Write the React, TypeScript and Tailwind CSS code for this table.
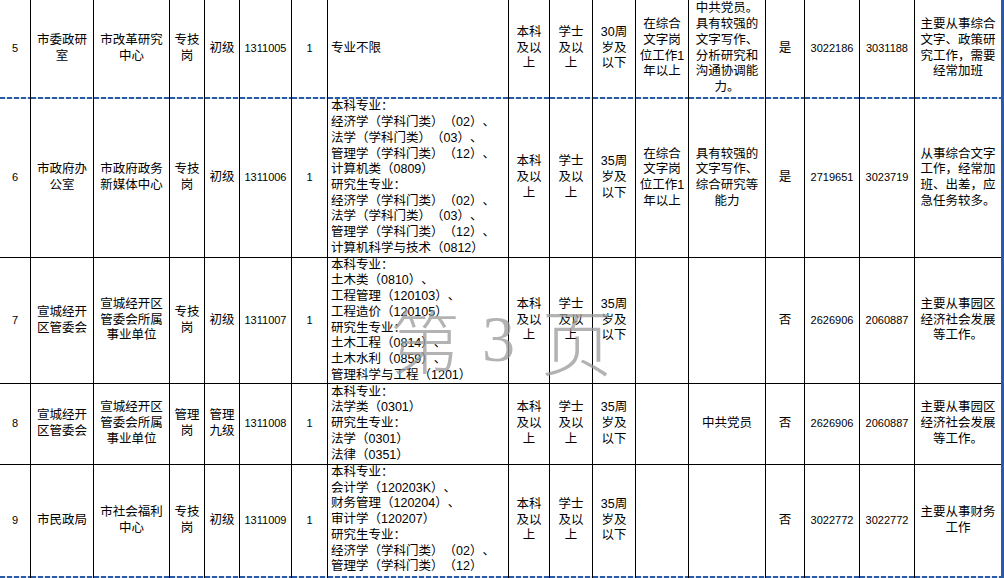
import React from "react";

type K = "c" | "l" | "n" | "lt";
type C = { t: string; k?: K };

const rows: { dashed: boolean; cells: C[] }[] = [
  {
    dashed: true,
    cells: [
      { t: "5", k: "n" },
      { t: "市委政研|室" },
      { t: "市改革研究|中心" },
      { t: "专技|岗" },
      { t: "初级" },
      { t: "1311005", k: "n" },
      { t: "1", k: "n" },
      { t: "专业不限", k: "l" },
      { t: "本科|及以|上" },
      { t: "学士|及以|上" },
      { t: "30周|岁及|以下" },
      { t: "在综合|文字岗|位工作1|年以上" },
      { t: "中共党员。|具有较强的|文字写作、|分析研究和|沟通协调能|力。" },
      { t: "是" },
      { t: "3022186", k: "n" },
      { t: "3031188", k: "n" },
      { t: "主要从事综合|文字、政策研|究工作，需要|经常加班" },
    ],
  },
  {
    dashed: false,
    cells: [
      { t: "6", k: "n" },
      { t: "市政府办|公室" },
      { t: "市政府政务|新媒体中心" },
      { t: "专技|岗" },
      { t: "初级" },
      { t: "1311006", k: "n" },
      { t: "1", k: "n" },
      {
        t: "本科专业：|经济学（学科门类）（02）、|法学（学科门类）（03）、|管理学（学科门类）（12）、|计算机类（0809）|研究生专业：|经济学（学科门类）（02）、|法学（学科门类）（03）、|管理学（学科门类）（12）、|计算机科学与技术（0812）",
        k: "l",
      },
      { t: "本科|及以|上" },
      { t: "学士|及以|上" },
      { t: "35周|岁及|以下" },
      { t: "在综合|文字岗|位工作1|年以上" },
      { t: "具有较强的|文字写作、|综合研究等|能力" },
      { t: "是" },
      { t: "2719651", k: "n" },
      { t: "3023719", k: "n" },
      { t: "从事综合文字|工作，经常加|班、出差，应|急任务较多。" },
    ],
  },
  {
    dashed: false,
    cells: [
      { t: "7", k: "n" },
      { t: "宣城经开|区管委会" },
      { t: "宣城经开区|管委会所属|事业单位" },
      { t: "专技|岗" },
      { t: "初级" },
      { t: "1311007", k: "n" },
      { t: "1", k: "n" },
      {
        t: "本科专业：|土木类（0810）、|工程管理（120103）、|工程造价（120105）|研究生专业：|土木工程（0814）、|土木水利（0859）、|管理科学与工程（1201）",
        k: "l",
      },
      { t: "本科|及以|上" },
      { t: "学士|及以|上" },
      { t: "35周|岁及|以下" },
      { t: "" },
      { t: "" },
      { t: "否" },
      { t: "2626906", k: "n" },
      { t: "2060887", k: "n" },
      { t: "主要从事园区|经济社会发展|等工作。" },
    ],
  },
  {
    dashed: false,
    cells: [
      { t: "8", k: "n" },
      { t: "宣城经开|区管委会" },
      { t: "宣城经开区|管委会所属|事业单位" },
      { t: "管理|岗" },
      { t: "管理|九级" },
      { t: "1311008", k: "n" },
      { t: "1", k: "n" },
      { t: "本科专业：|法学类（0301）|研究生专业：|法学（0301）|法律（0351）", k: "l" },
      { t: "本科|及以|上" },
      { t: "学士|及以|上" },
      { t: "35周|岁及|以下" },
      { t: "" },
      { t: "中共党员" },
      { t: "否" },
      { t: "2626906", k: "n" },
      { t: "2060887", k: "n" },
      { t: "主要从事园区|经济社会发展|等工作。" },
    ],
  },
  {
    dashed: true,
    cells: [
      { t: "9", k: "n" },
      { t: "市民政局" },
      { t: "市社会福利|中心" },
      { t: "专技|岗" },
      { t: "初级" },
      { t: "1311009", k: "n" },
      { t: "1", k: "n" },
      {
        t: "本科专业：|会计学（120203K）、|财务管理（120204）、|审计学（120207）|研究生专业：|经济学（学科门类）（02）、|管理学（学科门类）（12）",
        k: "lt",
      },
      { t: "本科|及以|上" },
      { t: "学士|及以|上" },
      { t: "35周|岁及|以下" },
      { t: "" },
      { t: "" },
      { t: "否" },
      { t: "3022772", k: "n" },
      { t: "3022772", k: "n" },
      { t: "主要从事财务|工作" },
    ],
  },
];

function Lines({ t }: { t: string }) {
  const parts = t.split("|");
  return (
    <>
      {parts.map((p, i) => (
        <React.Fragment key={i}>
          {i > 0 && <br />}
          {p}
        </React.Fragment>
      ))}
    </>
  );
}

function Cell({ c, dashed, last }: { c: C; dashed: boolean; last: boolean }) {
  let align = "justify-center items-center text-center";
  if (c.k === "l") align = "justify-start items-center text-left pl-[3px]";
  if (c.k === "lt") align = "justify-start items-start text-left pl-[3px]";
  const font = c.k === "n" ? "text-[11px] font-['Liberation_Sans',sans-serif]" : "";
  return (
    <div className={"flex min-h-0 flex-col " + (last ? "" : "border-r border-black")}>
      <div className={"flex min-h-0 flex-1 overflow-hidden " + align}>
        <div className={"whitespace-nowrap " + font}>
          <Lines t={c.t} />
        </div>
      </div>
      {dashed ? (
        <div className="h-[2px] shrink-0 bg-[repeating-linear-gradient(90deg,#2b5aa6_0px,#2b5aa6_5px,#dfe6f2_5px,#dfe6f2_7px)]" />
      ) : (
        <div className="h-px shrink-0 bg-black" />
      )}
    </div>
  );
}

export default function App() {
  return (
    <div className="relative h-[578px] w-[1004px] overflow-hidden bg-white font-['Liberation_Sans','Noto_Sans_CJK_SC',sans-serif] text-[12.5px] leading-[15.7px] text-black [text-spacing-trim:space-all]">
      <div className="grid w-[1004px] grid-cols-[31px_63px_76px_35px_35px_52px_36px_181px_41px_43px_43px_53px_77px_39px_55px_55px_86px] grid-rows-[99px_159px_126px_81px_113px] border-r-[3px] border-[#2b5aa6]">
        {rows.map((r, ri) =>
          r.cells.map((c, ci) => (
            <Cell key={ri + "-" + ci} c={c} dashed={r.dashed} last={ci === r.cells.length - 1} />
          ))
        )}
      </div>
      <div className="pointer-events-none absolute left-[390px] top-[303px] flex items-center leading-none text-[#9a9a9a] opacity-75">
        <span className="font-['Noto_Sans_CJK_SC',sans-serif] text-[70px] font-extralight">第</span>
        <span className="ml-[22px] font-['Liberation_Serif',serif] text-[66px]">3</span>
        <span className="ml-[26px] font-['Noto_Sans_CJK_SC',sans-serif] text-[72px] font-extralight">页</span>
      </div>
    </div>
  );
}
